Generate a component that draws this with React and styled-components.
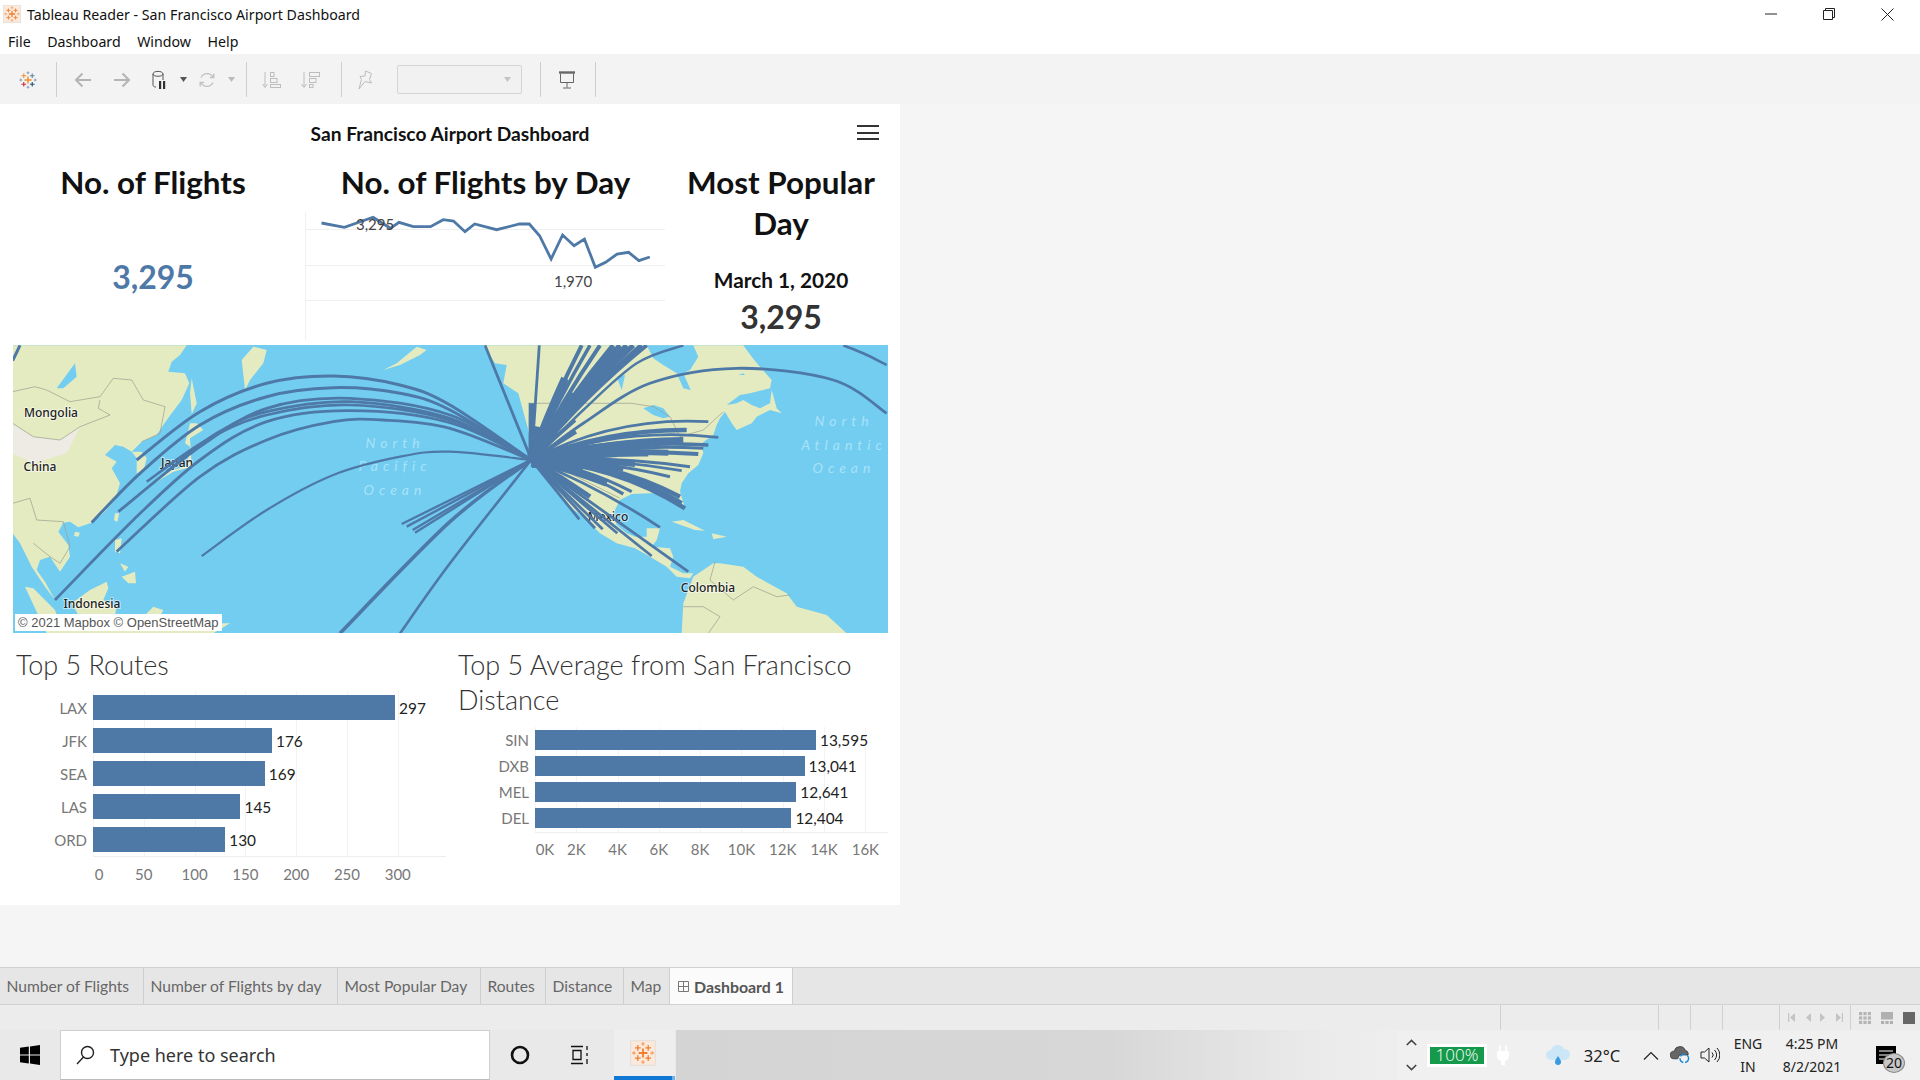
import React from "react";
import styled, { createGlobalStyle } from "styled-components";

const Global = createGlobalStyle`
  html, body { margin: 0; padding: 0; background: #f5f5f5; }
  body { width: 1920px; height: 1080px; overflow: hidden; font-family: "Noto Sans", sans-serif; }
  * { box-sizing: border-box; }
`;

const UI = `"Noto Sans", "Open Sans", sans-serif`;
const DASH = `Lato, "Open Sans", sans-serif`;
const BLUE = "#4e79a7";

const Page = styled.div`
  width: 1920px; height: 1080px; display: flex; flex-direction: column; background: #f5f5f5;
`;

/* ---------- window chrome ---------- */
const TitleBar = styled.div`
  height: 27px; background: #fff; display: flex; align-items: center; padding: 1px 0 0 3px;
`;
const TitleText = styled.span`
  font: 14.2px ${UI}; color: #111; margin-left: 6px; white-space: nowrap;
`;
const WindowButtons = styled.div`
  margin-left: auto; display: flex; height: 26px; margin-right: 4px;
`;
const WindowButton = styled.div`
  width: 58px; display: flex; align-items: center; justify-content: center;
`;
const MenuBar = styled.div`
  height: 27px; background: #fff; display: flex; align-items: center; padding: 2px 0 0 8px; gap: 16.5px;
`;
const MenuItem = styled.span`
  font: 14.2px ${UI}; color: #111;
`;
const Toolbar = styled.div`
  height: 51px; background: #f3f3f3; display: flex; align-items: center; padding-top: 2px;
`;
const ToolSlot = styled.div`
  width: ${p => p.$w}px; margin-left: ${p => p.$l || 0}px; height: 30px; display: flex; align-items: center; justify-content: center; flex: none;
`;
const ToolSep = styled.div`
  width: 1px; height: 35px; background: #cfcfcf; margin-left: ${p => p.$l || 0}px; flex: none;
`;
const Combo = styled.div`
  width: 125px; height: 29px; margin-left: ${p => p.$l}px; border: 1px solid #d4d4d4; border-radius: 2px; background: #f1f1f1;
  display: flex; align-items: center; justify-content: flex-end; padding-right: 10px; flex: none;
`;

/* ---------- dashboard ---------- */
const Main = styled.div`
  height: 863px; flex: none;
`;
const Dashboard = styled.div`
  width: 900px; height: 801px; background: #fff; font-family: ${DASH}; display: flex; flex-direction: column;
`;
const Header = styled.div`
  height: 58px; display: grid; grid-template-columns: 1fr auto 1fr; padding-top: 18px; align-items: start;
`;
const DashTitle = styled.div`
  font: 700 19.2px/24px ${DASH}; color: #111; grid-column: 2; white-space: nowrap;
`;
const Hamburger = styled.div`
  justify-self: end; margin-right: 21px; margin-top: 3px; width: 22px; height: 15px;
  border-top: 2px solid #333; border-bottom: 2px solid #333; display: flex; align-items: center;
  &::before { content: ""; display: block; width: 100%; height: 2px; background: #333; }
`;
const KpiRow = styled.div`
  height: 183px; display: grid; grid-template-columns: 306px 359px 212px; flex: none;
`;
const KpiCard = styled.div`
  text-align: center; margin-left: ${p => p.$l || 0}px; width: ${p => p.$w || "auto"};
`;
const KpiTitle = styled.div`
  font: 700 31.4px/41px ${DASH}; color: #111; white-space: ${p => (p.$wrap ? "normal" : "nowrap")};
`;
const KpiValue = styled.div`
  font: 700 32px/40px ${DASH}; color: ${p => p.$c}; margin-top: ${p => p.$t}px;
`;
const KpiDate = styled.div`
  font: 700 20.8px/28px ${DASH}; color: #111; margin-top: 22px;
`;
const TrendSvg = styled.svg`
  display: block; width: 360px; height: 128px; margin: 9px 0 0 -1px;
  text { font: 15px ${DASH}; fill: #444; }
`;
const MapFrame = styled.div`
  margin: 0 12px 0 13px; height: 288px; position: relative; overflow: hidden; flex: none; background: #72cdf1;
`;
const MapSvg = styled.svg`
  display: block; width: 875px; height: 288px;
`;
const Place = styled.text`
  font: 500 12px ${UI}; fill: #222; stroke: rgba(255,255,255,.55); stroke-width: 2px; paint-order: stroke; text-anchor: middle;
`;
const Sea = styled.text`
  font: italic 14px ${DASH}; letter-spacing: 5px; fill: #a9e2f7; text-anchor: middle;
`;
const Attribution = styled.div`
  position: absolute; left: 2px; bottom: 2px; background: #fff; color: #555; padding: 0 3px;
  font: 13px/17px "Liberation Sans", sans-serif; white-space: nowrap;
`;
const ChartsRow = styled.div`
  display: grid; grid-template-columns: 442px 442px; padding: 14px 0 0 16px;
`;
const ChartPane = styled.div``;
const ChartTitle = styled.div`
  font: 300 27px/35px ${DASH}; color: #333; width: 430px;
`;
const Rows = styled.div`
  margin-top: ${p => p.$top}px; margin-left: 77px; width: 353px; display: flex; flex-direction: column;
  gap: ${p => p.$gap}px; padding: ${p => p.$pt}px 0 4px;
  border-bottom: 1px solid #eee;
  background-image: repeating-linear-gradient(to right, #f3f3f3 0 1px, transparent 1px ${p => p.$step}px);
`;
const BarRow = styled.div`
  display: flex; align-items: center; height: ${p => p.$h}px; position: relative;
`;
const BarLabel = styled.span`
  position: absolute; right: calc(100% + 6px); font: 15px ${DASH}; color: #777;
`;
const Bar = styled.div`
  height: 100%; background: ${BLUE}; flex: none;
`;
const BarValue = styled.span`
  font: 15.4px ${DASH}; color: #222; margin-left: 4px;
`;
const Axis = styled.div`
  display: flex; margin-left: ${p => 77 - p.$step / 2}px; margin-top: ${p => p.$t}px;
`;
const Tick = styled.span`
  flex: none; width: ${p => p.$step}px; text-align: center; font: 15px/18px ${DASH}; color: #777;
  transform: translateX(${p => p.$nudge || 0}px);
`;

/* ---------- tabs / status ---------- */
const Spacer = styled.div`
  height: 62px; flex: none;
`;
const Tabs = styled.div`
  height: 38px; flex: none; background: #e6e6e6; border-top: 1px solid #d2d2d2; border-bottom: 1px solid #d2d2d2; display: flex;
`;
const Tab = styled.div`
  width: ${p => p.$w}px; border-right: 1px solid #cfcfcf; display: flex; align-items: center; gap: 5px;
  padding-left: ${p => (p.$active ? 8 : 6.5)}px;
  font: ${p => (p.$active ? 700 : 400)} ${p => (p.$active ? 15.9 : 15.6)}px ${DASH}; color: ${p => (p.$active ? "#555" : "#666")};
  background: ${p => (p.$active ? "#fbfbfb" : "transparent")}; white-space: nowrap;
`;
const Status = styled.div`
  height: 25px; flex: none; background: #ececec; display: flex;
`;
const StatusCell = styled.div`
  width: ${p => p.$w}px; flex: none; border-right: ${p => (p.$line ? "1px solid #d0d0d0" : "none")};
  display: flex; align-items: center; gap: ${p => p.$gap || 0}px; padding-left: ${p => p.$pad || 0}px;
`;

/* ---------- taskbar ---------- */
const Taskbar = styled.div`
  height: 50px; flex: none; display: flex; background: #e9e9e9; align-items: stretch;
`;
const Slot = styled.div`
  width: ${p => p.$w}px; flex: none; display: flex; align-items: center;
  justify-content: ${p => (p.$start ? "flex-start" : "center")};
  flex-direction: ${p => (p.$col ? "column" : "row")};
  gap: ${p => p.$gap || 0}px;
`;
const SearchBox = styled.div`
  width: 430px; flex: none; background: #fff; border: 1px solid #cfcfcf; border-bottom: 1px solid #bbb; display: flex; align-items: center; padding-left: 15px; gap: 15px;
  font: 18px ${UI}; color: #333;
`;
const ActiveApp = styled.div`
  width: 61px; margin: 0 1px 0 4px; padding-right: 3px; flex: none; background: #eee;
  border-bottom: 4px solid #0f78d4; border-image: linear-gradient(to right, #0f78d4 93%, #6fb1e8 93%) 1;
  display: flex; align-items: center; justify-content: center;
`;
const Wallpaper = styled.div`
  flex: 1; background: linear-gradient(to right, #d5d4d4 0, #d7d7d7 60%, #ebebeb 90%, #eeeeee 100%);
`;
const Tray = styled.div`
  width: 522px; flex: none; background: #f0f0f0; display: flex;
`;
const Battery = styled.div`
  width: 60px; height: 23px; margin-left: 3px; background: #159a4b; border: 3px solid #fff; color: #fff;
  font: 300 17px/16px "Open Sans", sans-serif; text-align: center;
`;
const TrayText = styled.div`
  font: ${p => p.$s || 14}px/23px ${UI}; color: #222; white-space: nowrap;
`;
const NotifyWrap = styled.div`
  position: relative; width: 20px; height: 18px; margin-right: 6px;
`;
const NotifyBadge = styled.span`
  position: absolute; left: 7px; top: 7px; width: 22px; height: 20px; border-radius: 50%; background: #c8c8c8; border: 1px solid #888;
  font: 14px/18px ${UI}; color: #111; text-align: center;
`;

/* ---------- drawings ---------- */
const Cross = ({ x, y, r, c, w = 1 }) => (
  <path d={`M${x - r} ${y}H${x + r}M${x} ${y - r}V${y + r}`} stroke={c} strokeWidth={w} fill="none" />
);
const TableauMark = ({ size = 20 }) => (
  <svg width={size} height={size} viewBox="0 0 20 20">
    <Cross x={10} y={10} r={4} c="#f28e2b" w={1.6} />
    <Cross x={5.3} y={5.3} r={2.6} c="#f28e2b" w={1.2} />
    <Cross x={14.7} y={5.3} r={2.6} c="#59879b" w={1.2} />
    <Cross x={5.3} y={14.7} r={2.6} c="#c8283c" w={1.2} />
    <Cross x={14.7} y={14.7} r={2.6} c="#1f4e79" w={1.2} />
    <Cross x={10} y={2} r={1.6} c="#7f99b2" />
    <Cross x={10} y={18} r={1.6} c="#7f99b2" />
    <Cross x={2} y={10} r={1.6} c="#7f99b2" />
    <Cross x={18} y={10} r={1.6} c="#7f99b2" />
  </svg>
);
const AppIcon = ({ size = 20 }) => (
  <svg width={size} height={size} viewBox="0 0 20 20">
    <rect x="0.5" y="0.5" width="19" height="19" fill="#fbe9dc" stroke="#e8e0da" />
    <Cross x={10} y={10} r={3.4} c="#f07f2e" w={1.4} />
    <Cross x={6} y={6} r={2.2} c="#f07f2e" />
    <Cross x={14} y={6} r={2.2} c="#f07f2e" />
    <Cross x={6} y={14} r={2.2} c="#f07f2e" />
    <Cross x={14} y={14} r={2.2} c="#f07f2e" />
    <Cross x={10} y={3} r={1.4} c="#f5a56a" />
    <Cross x={10} y={17} r={1.4} c="#f5a56a" />
    <Cross x={3} y={10} r={1.4} c="#f5a56a" />
    <Cross x={17} y={10} r={1.4} c="#f5a56a" />
  </svg>
);
const Arrow = ({ flip }) => (
  <svg width="18" height="16" viewBox="0 0 18 16" style={flip ? { transform: "scaleX(-1)" } : undefined}>
    <path d="M17 8H2M8.500 1.500 2 8l6.500 6.500" fill="none" stroke="#b4b4b4" strokeWidth="2" />
  </svg>
);
const DbPause = () => (
  <svg width="18" height="20" viewBox="0 0 18 20">
    <path d="M2 4c0-3.500 10-3.500 10 0v6M2 4c0 3 10 3 10 0M2 4v11c0 1 1 2 3 2" fill="none" stroke="#555" />
    <path d="M8 11h2.200v8H8zM12 11h2.200v8H12z" fill="#333" />
  </svg>
);
const Caret = ({ c = "#555" }) => (
  <svg width="7" height="5" viewBox="0 0 7 5"><path d="M0 0h7L3.500 5z" fill={c} /></svg>
);
const Refresh = () => (
  <svg width="18" height="18" viewBox="0 0 18 18" fill="none" stroke="#c2c2c2" strokeWidth="1.400">
    <path d="M3 6.500A6.800 6.800 0 0 1 15 6M15 11.500A6.800 6.800 0 0 1 3 12" />
    <path d="M15.800 2.500V6.500H11.800M2.200 15.500v-4h4" />
  </svg>
);
const SortAsc = ({ rev }) => (
  <svg width="20" height="18" viewBox="0 0 20 18" fill="none" stroke="#bdbdbd">
    <path d="M3 1v15M.5 13 3 16.500 5.500 13" />
    {rev ? (
      <>
        <rect x="8.500" y="1.500" width="10" height="4" />
        <rect x="8.500" y="7.500" width="6.500" height="4" />
        <rect x="8.500" y="13.500" width="3.500" height="3" />
      </>
    ) : (
      <>
        <rect x="8.500" y="1.500" width="3.500" height="4" />
        <rect x="8.500" y="7.500" width="6.500" height="4" />
        <rect x="8.500" y="13.500" width="10" height="3" />
      </>
    )}
  </svg>
);
const Pin = () => (
  <svg width="16" height="20" viewBox="0 0 16 20" fill="none" stroke="#bdbdbd">
    <path d="M8.500 1 14.500 3.500 12.500 9.500 14.500 13 8 11.500 2 19 4.500 9.500 3 6.500 8 6z" />
  </svg>
);
const Presentation = () => (
  <svg width="18" height="18" viewBox="0 0 18 18" fill="none" stroke="#666">
    <path d="M1 1.500h16" strokeWidth="2.400" />
    <path d="M2.500 2.500v9h13v-9M9 11.500v5M5 17h8" />
  </svg>
);
const MinimizeIcon = () => <svg width="12" height="2" viewBox="0 0 12 2"><path d="M0 1h12" stroke="#222" /></svg>;
const RestoreIcon = () => (
  <svg width="12" height="12" viewBox="0 0 12 12" fill="none" stroke="#222"><path d="M.5 2.500h9v9h-9zM2.500 2.500v-2h9v9h-2" /></svg>
);
const CloseIcon = () => (
  <svg width="13" height="13" viewBox="0 0 13 13" fill="none" stroke="#222"><path d="M.5.5l12 12M12.500.5l-12 12" /></svg>
);
const SheetGrid = () => (
  <svg width="11" height="11" viewBox="0 0 11 11" fill="none" stroke="#777"><path d="M.5.5h10v10H.5zM5.500.5v10M.5 5.500h10" /></svg>
);
const NavGlyph = ({ bar, flip }) => (
  <svg width="7" height="9" viewBox="0 0 7 9" style={flip ? { transform: "scaleX(-1)" } : undefined}>
    <path d="M7 0v9L2 4.500z" fill="#c4c4c4" />
    {bar && <path d="M0 0h1.200v9H0z" fill="#c4c4c4" />}
  </svg>
);
const ViewGrid = () => (
  <svg width="12" height="12" viewBox="0 0 12 12" fill="#b5b5b5">
    {[0, 4.4, 8.8].flatMap(x => [0, 4.4, 8.8].map(y => <rect key={`${x}-${y}`} x={x} y={y} width="3.200" height="3.200" />))}
  </svg>
);
const ViewFilm = () => (
  <svg width="12" height="12" viewBox="0 0 12 12" fill="#b0b0b0">
    <rect width="12" height="7.500" /><rect y="9" width="3.200" height="3" /><rect x="4.400" y="9" width="3.200" height="3" /><rect x="8.800" y="9" width="3.200" height="3" />
  </svg>
);
const ViewFull = () => <svg width="12" height="12" viewBox="0 0 12 12"><rect width="12" height="12" fill="#666" /></svg>;
const WinLogo = () => (
  <svg width="20" height="20" viewBox="0 0 20 20" fill="#000">
    <path d="M0 2.800 8.800 1.600v8H0zM10 1.400 20 0v9.600H10zM0 10.600h8.800v8L0 17.300zM10 10.600h10V20L10 18.600z" />
  </svg>
);
const SearchIcon = () => (
  <svg width="19" height="20" viewBox="0 0 19 20" fill="none" stroke="#222" strokeWidth="1.400">
    <circle cx="11.500" cy="7.500" r="6" /><path d="M7.500 12 1 19" />
  </svg>
);
const Cortana = () => (
  <svg width="20" height="20" viewBox="0 0 20 20"><circle cx="10" cy="10" r="8" fill="none" stroke="#111" strokeWidth="2.600" /></svg>
);
const TaskView = () => (
  <svg width="20" height="20" viewBox="0 0 20 20" fill="none" stroke="#111" strokeWidth="1.300">
    <path d="M1 1.500h12M3 5.500h8v9H3zM1 18.500h12M17 1v4M17 8v3M17 14v5" />
  </svg>
);
const ChevronV = ({ down }) => (
  <svg width="11" height="7" viewBox="0 0 11 7" fill="none" stroke="#444" strokeWidth="1.600">
    <path d={down ? "M.8 1l4.700 4.600L10.200 1" : "M.8 6l4.700-4.600L10.200 6"} />
  </svg>
);
const Plug = () => (
  <svg width="12" height="20" viewBox="0 0 12 20" fill="#fff">
    <path d="M2 0h1.600v6H2zM8.400 0H10v6H8.400zM0 6h12v5a5 5 0 0 1-4 4.800V20H4v-4.200A5 5 0 0 1 0 11z" />
  </svg>
);
const Weather = () => (
  <svg width="26" height="22" viewBox="0 0 26 22">
    <path d="M6 16a5 5 0 0 1 0-10 7 7 0 0 1 13-1 5.500 5.500 0 0 1 1 11z" fill="#cbe6f7" />
    <path d="M13 12c2 3 3 4.500 3 6a3 3 0 0 1-6 0c0-1.500 1-3 3-6z" fill="#3b9ae1" />
  </svg>
);
const CaretUp = () => (
  <svg width="16" height="9" viewBox="0 0 16 9" fill="none" stroke="#222" strokeWidth="1.200"><path d="M1 8.500 8 1.500l7 7" /></svg>
);
const CloudSync = () => (
  <svg width="21" height="18" viewBox="0 0 21 18">
    <path d="M4 13a4 4 0 0 1 .5-8A6 6 0 0 1 16 4a4 4 0 0 1 3 5H10l-2 4z" fill="#666" stroke="#222" strokeWidth=".7" />
    <circle cx="15" cy="12.500" r="4.500" fill="none" stroke="#1b86d6" strokeWidth="1.500" strokeDasharray="6 2" />
  </svg>
);
const Speaker = () => (
  <svg width="20" height="18" viewBox="0 0 20 18" fill="none" stroke="#222">
    <path d="M1 6h3.500L9 2v14l-4.500-4H1zM12 6.500a3.500 3.500 0 0 1 0 5M14.500 4a7 7 0 0 1 0 10M17 2a10 10 0 0 1 0 14" />
  </svg>
);
const NotifyIcon = () => (
  <svg width="20" height="18" viewBox="0 0 20 18"><rect width="20" height="18" fill="#000" /><path d="M3 5h14M3 9h14M3 13h10" stroke="#fff" strokeWidth="1.200" /></svg>
);

/* ---------- trend chart ---------- */
const TREND = [[560,342],[600,355],[650,325],[680,358],[695,340],[720,353],[750,353],[772,332],[790,336],[810,368],[827,345],[865,362],[905,345],[922,345],[940,380],[960,450],[980,378],[1000,410],[1018,390],[1037,475],[1055,460],[1075,435],[1095,430],[1113,455],[1132,444]]
  .map(([x, y]) => `${(x / 1.742 - 305).toFixed(1)},${(y / 3 + 110 - 213).toFixed(1)}`).join(" ");

const TrendChart = () => (
  <TrendSvg viewBox="0 0 360 128">
    <path d="M.5 0V128" stroke="#f0f0f0" />
    <path d="M0 17.500H360M0 53.500H360M0 88.500H360" stroke="#efefef" />
    <polyline points={TREND} fill="none" stroke={BLUE} strokeWidth="2.800" />
    <text x="51" y="18">3,295</text>
    <text x="249" y="75">1,970</text>
  </TrendSvg>
);

/* ---------- map ---------- */
const p3 = s => s.trim().split(/\s+/).map(t => { const [x, y] = t.split(",").map(Number); return `${(x / 3).toFixed(1)},${(340 + y / 3).toFixed(1)}`; }).join(" ");
const p4 = s => s.trim().split(/\s+/).map(t => { const [x, y] = t.split(",").map(Number); return `${(450 + x / 3).toFixed(1)},${(340 + y / 3).toFixed(1)}`; }).join(" ");

const LAND_3 = [
  "38,16 560,16 540,45 515,65 505,95 555,100 568,130 545,180 500,240 470,285 425,305 395,335 370,320 345,315 315,345 350,365 335,385 360,430 345,480 310,520 275,548 235,562 210,545 190,548 175,575 205,615 210,650 180,695 150,650 120,660 110,690 135,725 165,780 135,740 108,700 95,680 60,610 38,580",
  "395,335 425,335 440,355 430,395 410,400 410,355",
  "455,430 500,395 560,378 570,320 555,310 570,250 590,250 610,270 570,295 575,380 520,395 470,425",
  "575,115 590,190 575,222 570,160",
  "725,60 760,20 800,30 790,70 750,120 735,150",
  "1150,90 1190,70 1250,20 1280,30 1260,45 1200,75",
  "345,600 365,595 360,640 345,635",
  "345,520 358,520 352,546 342,540",
  "225,575 240,578 235,590 222,588",
  "365,710 405,695 408,730 385,730",
  "360,670 385,680 375,695",
  "75,740 100,745 165,810 190,880 140,880",
  "270,750 320,725 325,745 310,780 350,800 345,825 235,825 215,790",
  "460,800 490,810 480,830 430,830",
  "180,860 640,850 690,850 640,880 180,880",
];
const LAND_4 = [
  "100,16 880,16 905,50 925,75 965,120 960,145 900,160 870,165 830,195 860,190 880,180 905,195 930,205 960,190 965,150 980,205 995,220 960,210 920,230 905,250 860,270 845,250 825,215 810,235 800,255 790,285 755,310 760,340 745,375 715,400 695,430 690,455 705,505 685,475 650,460 600,460 545,462 510,480 490,520 500,555 530,580 555,590 590,590 590,565 630,565 620,600 605,620 660,625 670,650 660,680 700,700 730,700 720,715 680,710 650,680 600,650 555,625 500,610 450,580 400,530 345,490 300,430 250,370 235,270 205,160 160,130 170,75 135,70",
  "665,545 700,540 765,572 735,570",
  "785,580 830,590 790,598",
  "695,880 700,790 730,710 790,670 810,670 880,680 920,710 1010,760 1040,800 1130,825 1190,880",
];
const WATER_4 = [
  "590,16 730,16 745,50 720,90 700,100 722,150 700,145 680,100 640,75 610,55",
  "500,110 525,105 515,150",
  "580,205 610,195 640,205 660,230 640,235 610,225",
  "880,100 885,105 865,105",
];
const WATER_3 = ["170,145 225,70 230,110 190,145"];
const BORDERS = [
  p3("38,155 105,140 140,150 210,185 300,170 340,115 395,120 430,180 495,200 480,280 425,305"),
  p3("38,250 100,290 180,300 240,260 330,225 295,205 300,180"),
  p3("38,490 90,475 110,540 190,545 210,620 180,670 150,650 100,610"),
  p4("235,190 545,190 610,200 660,230 690,290 760,270 820,215"),
  p4("262,350 340,390 420,430 510,475"),
  p4("795,665 780,720 850,780 910,740 980,770 1020,765"),
  p4("700,800 760,800 810,830 775,880"),
];
const TAN_3 = "38,252 100,290 180,300 240,262 200,340 100,370 38,340";

const smooth = pts => {
  let d = `M${pts[0][0]} ${pts[0][1]}`;
  for (let i = 0; i < pts.length - 1; i++) {
    const a = pts[i - 1] || pts[i], b = pts[i], c = pts[i + 1], e = pts[i + 2] || c;
    d += `C${(b[0] + (c[0] - a[0]) / 6).toFixed(1)} ${(b[1] + (c[1] - a[1]) / 6).toFixed(1)} ${(c[0] - (e[0] - b[0]) / 6).toFixed(1)} ${(c[1] - (e[1] - b[1]) / 6).toFixed(1)} ${c[0].toFixed(1)} ${c[1].toFixed(1)}`;
  }
  return d;
};
const to3 = ([x, y]) => [x / 3, 340 + y / 3];
const to4 = ([x, y]) => [450 + x / 3, 340 + y / 3];
const ORIGIN = [531.5, 460];

const ARCS_3 = [
  [[[38,62],[60,16]], 3],
  [[[410,360],[600,215],[800,130],[1000,108],[1200,135],[1350,195],[1593,360]], 3],
  [[[275,548],[420,400],[600,255],[800,170],[1000,143],[1200,160],[1350,210],[1593,360]], 3],
  [[[355,515],[600,320],[800,205],[1050,175],[1350,225],[1593,360]], 2.8],
  [[[500,395],[650,280],[800,215],[1050,185],[1350,235],[1593,360]], 2.8],
  [[[440,425],[620,300],[800,225],[1050,195],[1350,240],[1593,360]], 2.6],
  [[[165,780],[400,540],[600,360],[800,245],[1050,212],[1350,248],[1593,360]], 2.8],
  [[[350,635],[600,410],[800,300],[1000,245],[1150,240],[1350,265],[1593,360]], 2.8],
  [[[605,648],[800,510],[1000,405],[1200,350],[1350,335],[1593,360]], 2.2],
  [[[1205,552],[1593,360]], 2.4],
  [[[1220,560],[1593,360]], 2.4],
  [[[1238,570],[1593,360]], 2.4],
  [[[1245,578],[1593,360]], 2.4],
  [[[1020,880],[1350,545],[1593,360]], 3.6],
  [[[1200,880],[1350,670],[1593,360]], 2.6],
];
const ARCS_4 = [
  [[[1310,220],[1150,120],[860,85],[600,130],[400,250],[270,345]], 2.8],
  [[[1310,75],[1240,40],[1180,16]], 2.6],
  [[[700,16],[560,70],[400,210],[270,340]], 2.4],
];
/* [x, y, width, bow] in zoom coordinates */
const FANS = [
  [775,245,2.8,.14],[805,292,2.8,.12],[710,270,4.5,.1],[775,315,3.5,.07],[760,325,3,.06],[745,342,4,.05],
  [700,300,6,.06],[655,338,6,.05],[600,310,8,.05],[595,342,5,.03],[560,320,10,.04],[500,330,14,.03],[450,350,16,.01],[400,375,14,0],
  [720,380,3,.05],[695,392,2.8,.05],[660,410,3.2,.06],[520,388,4,.04],[555,372,6,.03],
  [545,455,3.2,.09],[520,462,3.2,.09],[690,470,4.5,.12],[695,490,4.5,.13],[705,505,4.5,.13],[630,562,2.8,.05],[470,430,7,.04],[600,440,5,.1],
  [605,648,2.8,0],[715,695,2.8,0],[502,580,2.8,0],[458,568,2.8,0],[435,565,2.8,0],[388,538,2.8,0],[420,470,5,.02],
  [105,16,2.8,0],[268,16,2.8,0],[245,190,6,0],[265,260,10,0],
  [395,16,4,.03],[420,16,3.5,.03],[450,16,4,.03],[490,16,5,.04],[510,16,5,.05],[530,16,5,.05],[550,16,5,.05],[575,16,5,.05],[590,16,4,.05],
  [345,115,8,.02],[370,160,6,.03],[375,240,4,.02],[378,275,4,.01],
];
const fanPath = ([x, y, , bow]) => {
  const [ex, ey] = to4([x, y]);
  const [ox, oy] = ORIGIN;
  const dx = ex - ox, dy = ey - oy;
  const cx = (ex + ox) / 2 + dy * bow, cy = (ey + oy) / 2 - dx * bow;
  return `M${ex.toFixed(1)} ${ey.toFixed(1)}Q${cx.toFixed(1)} ${cy.toFixed(1)} ${ox} ${oy}`;
};

const FlightMap = () => (
  <MapFrame>
    <MapSvg viewBox="13 345 875 288">
      {LAND_3.map((d, i) => <polygon key={i} points={p3(d)} fill="#e4ebc0" />)}
      <polygon points={p3(TAN_3)} fill="#eeeae4" />
      {LAND_4.map((d, i) => <polygon key={i} points={p4(d)} fill="#e4ebc0" />)}
      {WATER_4.map((d, i) => <polygon key={i} points={p4(d)} fill="#72cdf1" />)}
      {WATER_3.map((d, i) => <polygon key={i} points={p3(d)} fill="#72cdf1" />)}
      {BORDERS.map((d, i) => <polyline key={i} points={d} fill="none" stroke="#9a9f90" strokeWidth=".7" />)}
      <Sea x={395} y={448}>North</Sea>
      <Sea x={395} y={471}>Pacific</Sea>
      <Sea x={395} y={495}>Ocean</Sea>
      <Sea x={844} y={426}>North</Sea>
      <Sea x={844} y={450}>Atlantic</Sea>
      <Sea x={844} y={473}>Ocean</Sea>
      <Place x={51} y={417}>Mongolia</Place>
      <Place x={40} y={471}>China</Place>
      <Place x={177} y={467}>Japan</Place>
      <Place x={92} y={608}>Indonesia</Place>
      <Place x={608} y={521}>Mexico</Place>
      <g fill="none" stroke={BLUE}>
        {ARCS_3.map(([pts, w], i) => <path key={i} d={smooth(pts.map(to3))} strokeWidth={w} />)}
        {ARCS_4.map(([pts, w], i) => <path key={i} d={smooth(pts.map(to4))} strokeWidth={w} />)}
        {FANS.map((f, i) => <path key={i} d={fanPath(f)} strokeWidth={f[2]} />)}
      </g>
      <Place x={708} y={592}>Colombia</Place>
    </MapSvg>
    <Attribution>© 2021 Mapbox © OpenStreetMap</Attribution>
  </MapFrame>
);

/* ---------- bar charts ---------- */
const ROUTES = [["LAX", 297], ["JFK", 176], ["SEA", 169], ["LAS", 145], ["ORD", 130]];
const DISTANCE = [["SIN", 13595], ["DXB", 13041], ["MEL", 12641], ["DEL", 12404]];

const BarChart = ({ data, scale, h, gap, top, pt, step, ticks, axisTop, firstNudge }) => (
  <>
    <Rows $gap={gap} $top={top} $pt={pt} $step={step}>
      {data.map(([k, v]) => (
        <BarRow key={k} $h={h}>
          <BarLabel>{k}</BarLabel>
          <Bar style={{ width: v * scale }} />
          <BarValue>{v.toLocaleString("en-US")}</BarValue>
        </BarRow>
      ))}
    </Rows>
    <Axis $step={step} $t={axisTop}>
      {ticks.map((t, i) => <Tick key={t} $step={step} $nudge={i === 0 ? firstNudge : 0}>{t}</Tick>)}
    </Axis>
  </>
);

const TABS = [["Number of Flights", 144], ["Number of Flights by day", 194], ["Most Popular Day", 143], ["Routes", 65], ["Distance", 78], ["Map", 46]];

export default function App() {
  return (
    <Page>
      <Global />
      <TitleBar>
        <AppIcon size={18} />
        <TitleText>Tableau Reader - San Francisco Airport Dashboard</TitleText>
        <WindowButtons>
          <WindowButton><MinimizeIcon /></WindowButton>
          <WindowButton><RestoreIcon /></WindowButton>
          <WindowButton><CloseIcon /></WindowButton>
        </WindowButtons>
      </TitleBar>
      <MenuBar>
        <MenuItem>File</MenuItem>
        <MenuItem>Dashboard</MenuItem>
        <MenuItem>Window</MenuItem>
        <MenuItem>Help</MenuItem>
      </MenuBar>
      <Toolbar>
        <ToolSlot $w={56}><TableauMark size={18} /></ToolSlot>
        <ToolSep />
        <ToolSlot $w={52}><Arrow /></ToolSlot>
        <ToolSlot $w={26}><Arrow flip /></ToolSlot>
        <ToolSlot $w={30} $l={10}><DbPause /></ToolSlot>
        <ToolSlot $w={10} $l={3}><Caret /></ToolSlot>
        <ToolSlot $w={22} $l={8}><Refresh /></ToolSlot>
        <ToolSlot $w={10} $l={8}><Caret c="#bbb" /></ToolSlot>
        <ToolSep $l={10} />
        <ToolSlot $w={30} $l={10}><SortAsc /></ToolSlot>
        <ToolSlot $w={30} $l={9}><SortAsc rev /></ToolSlot>
        <ToolSep $l={15} />
        <ToolSlot $w={20} $l={13}><Pin /></ToolSlot>
        <Combo $l={22}><Caret c="#c4c4c4" /></Combo>
        <ToolSep $l={18} />
        <ToolSlot $w={30} $l={11}><Presentation /></ToolSlot>
        <ToolSep $l={13} />
      </Toolbar>
      <Main>
        <Dashboard>
          <Header>
            <DashTitle>San Francisco Airport Dashboard</DashTitle>
            <Hamburger />
          </Header>
          <KpiRow>
            <KpiCard>
              <KpiTitle>No. of Flights</KpiTitle>
              <KpiValue $c={BLUE} $t={54}>3,295</KpiValue>
            </KpiCard>
            <KpiCard>
              <KpiTitle>No. of Flights by Day</KpiTitle>
              <TrendChart />
            </KpiCard>
            <KpiCard $l={10} $w="212px">
              <KpiTitle $wrap>Most Popular Day</KpiTitle>
              <KpiDate>March 1, 2020</KpiDate>
              <KpiValue $c="#333" $t={3}>3,295</KpiValue>
            </KpiCard>
          </KpiRow>
          <FlightMap />
          <ChartsRow>
            <ChartPane>
              <ChartTitle>Top 5 Routes</ChartTitle>
              <BarChart data={ROUTES} scale={1.017} h={25} gap={8} top={9} pt={4} step={50.8} ticks={[0, 50, 100, 150, 200, 250, 300]} axisTop={8} firstNudge={6} />
            </ChartPane>
            <ChartPane>
              <ChartTitle>Top 5 Average from San Francisco Distance</ChartTitle>
              <BarChart data={DISTANCE} scale={0.02067} h={20} gap={6} top={10} pt={3} step={41.3} ticks={["0K", "2K", "4K", "6K", "8K", "10K", "12K", "14K", "16K"]} axisTop={7} firstNudge={10} />
            </ChartPane>
          </ChartsRow>
        </Dashboard>
        <Spacer />
      </Main>
      <Tabs>
        {TABS.map(([t, w]) => <Tab key={t} $w={w}>{t}</Tab>)}
        <Tab $w={123} $active><SheetGrid />Dashboard 1</Tab>
      </Tabs>
      <Status>
        <StatusCell $w={1501} $line />
        <StatusCell $w={158} $line />
        <StatusCell $w={32} $line />
        <StatusCell $w={32} $line />
        <StatusCell $w={57} $line />
        <StatusCell $w={71} $line $gap={9} $pad={8}>
          <NavGlyph bar /><NavGlyph /><NavGlyph flip /><NavGlyph bar flip />
        </StatusCell>
        <StatusCell $w={69} $gap={10} $pad={8}>
          <ViewGrid /><ViewFilm /><ViewFull />
        </StatusCell>
      </Status>
      <Taskbar>
        <Slot $w={60}><WinLogo /></Slot>
        <SearchBox><SearchIcon />Type here to search</SearchBox>
        <Slot $w={60}><Cortana /></Slot>
        <Slot $w={60}><TaskView /></Slot>
        <ActiveApp><AppIcon size={26} /></ActiveApp>
        <Wallpaper />
        <Tray>
          <Slot $w={26} $col $gap={18}><ChevronV /><ChevronV down /></Slot>
          <Slot $w={68} $start><Battery>100%</Battery></Slot>
          <Slot $w={22}><Plug /></Slot>
          <Slot $w={30} />
          <Slot $w={28}><Weather /></Slot>
          <Slot $w={60}><TrayText $s={16.5}>32°C</TrayText></Slot>
          <Slot $w={38}><CaretUp /></Slot>
          <Slot $w={20}><CloudSync /></Slot>
          <Slot $w={40}><Speaker /></Slot>
          <Slot $w={36} $col><TrayText>ENG</TrayText><TrayText>IN</TrayText></Slot>
          <Slot $w={92} $col><TrayText>4:25 PM</TrayText><TrayText>8/2/2021</TrayText></Slot>
          <Slot $w={62}><NotifyWrap><NotifyIcon /><NotifyBadge>20</NotifyBadge></NotifyWrap></Slot>
        </Tray>
      </Taskbar>
    </Page>
  );
}
